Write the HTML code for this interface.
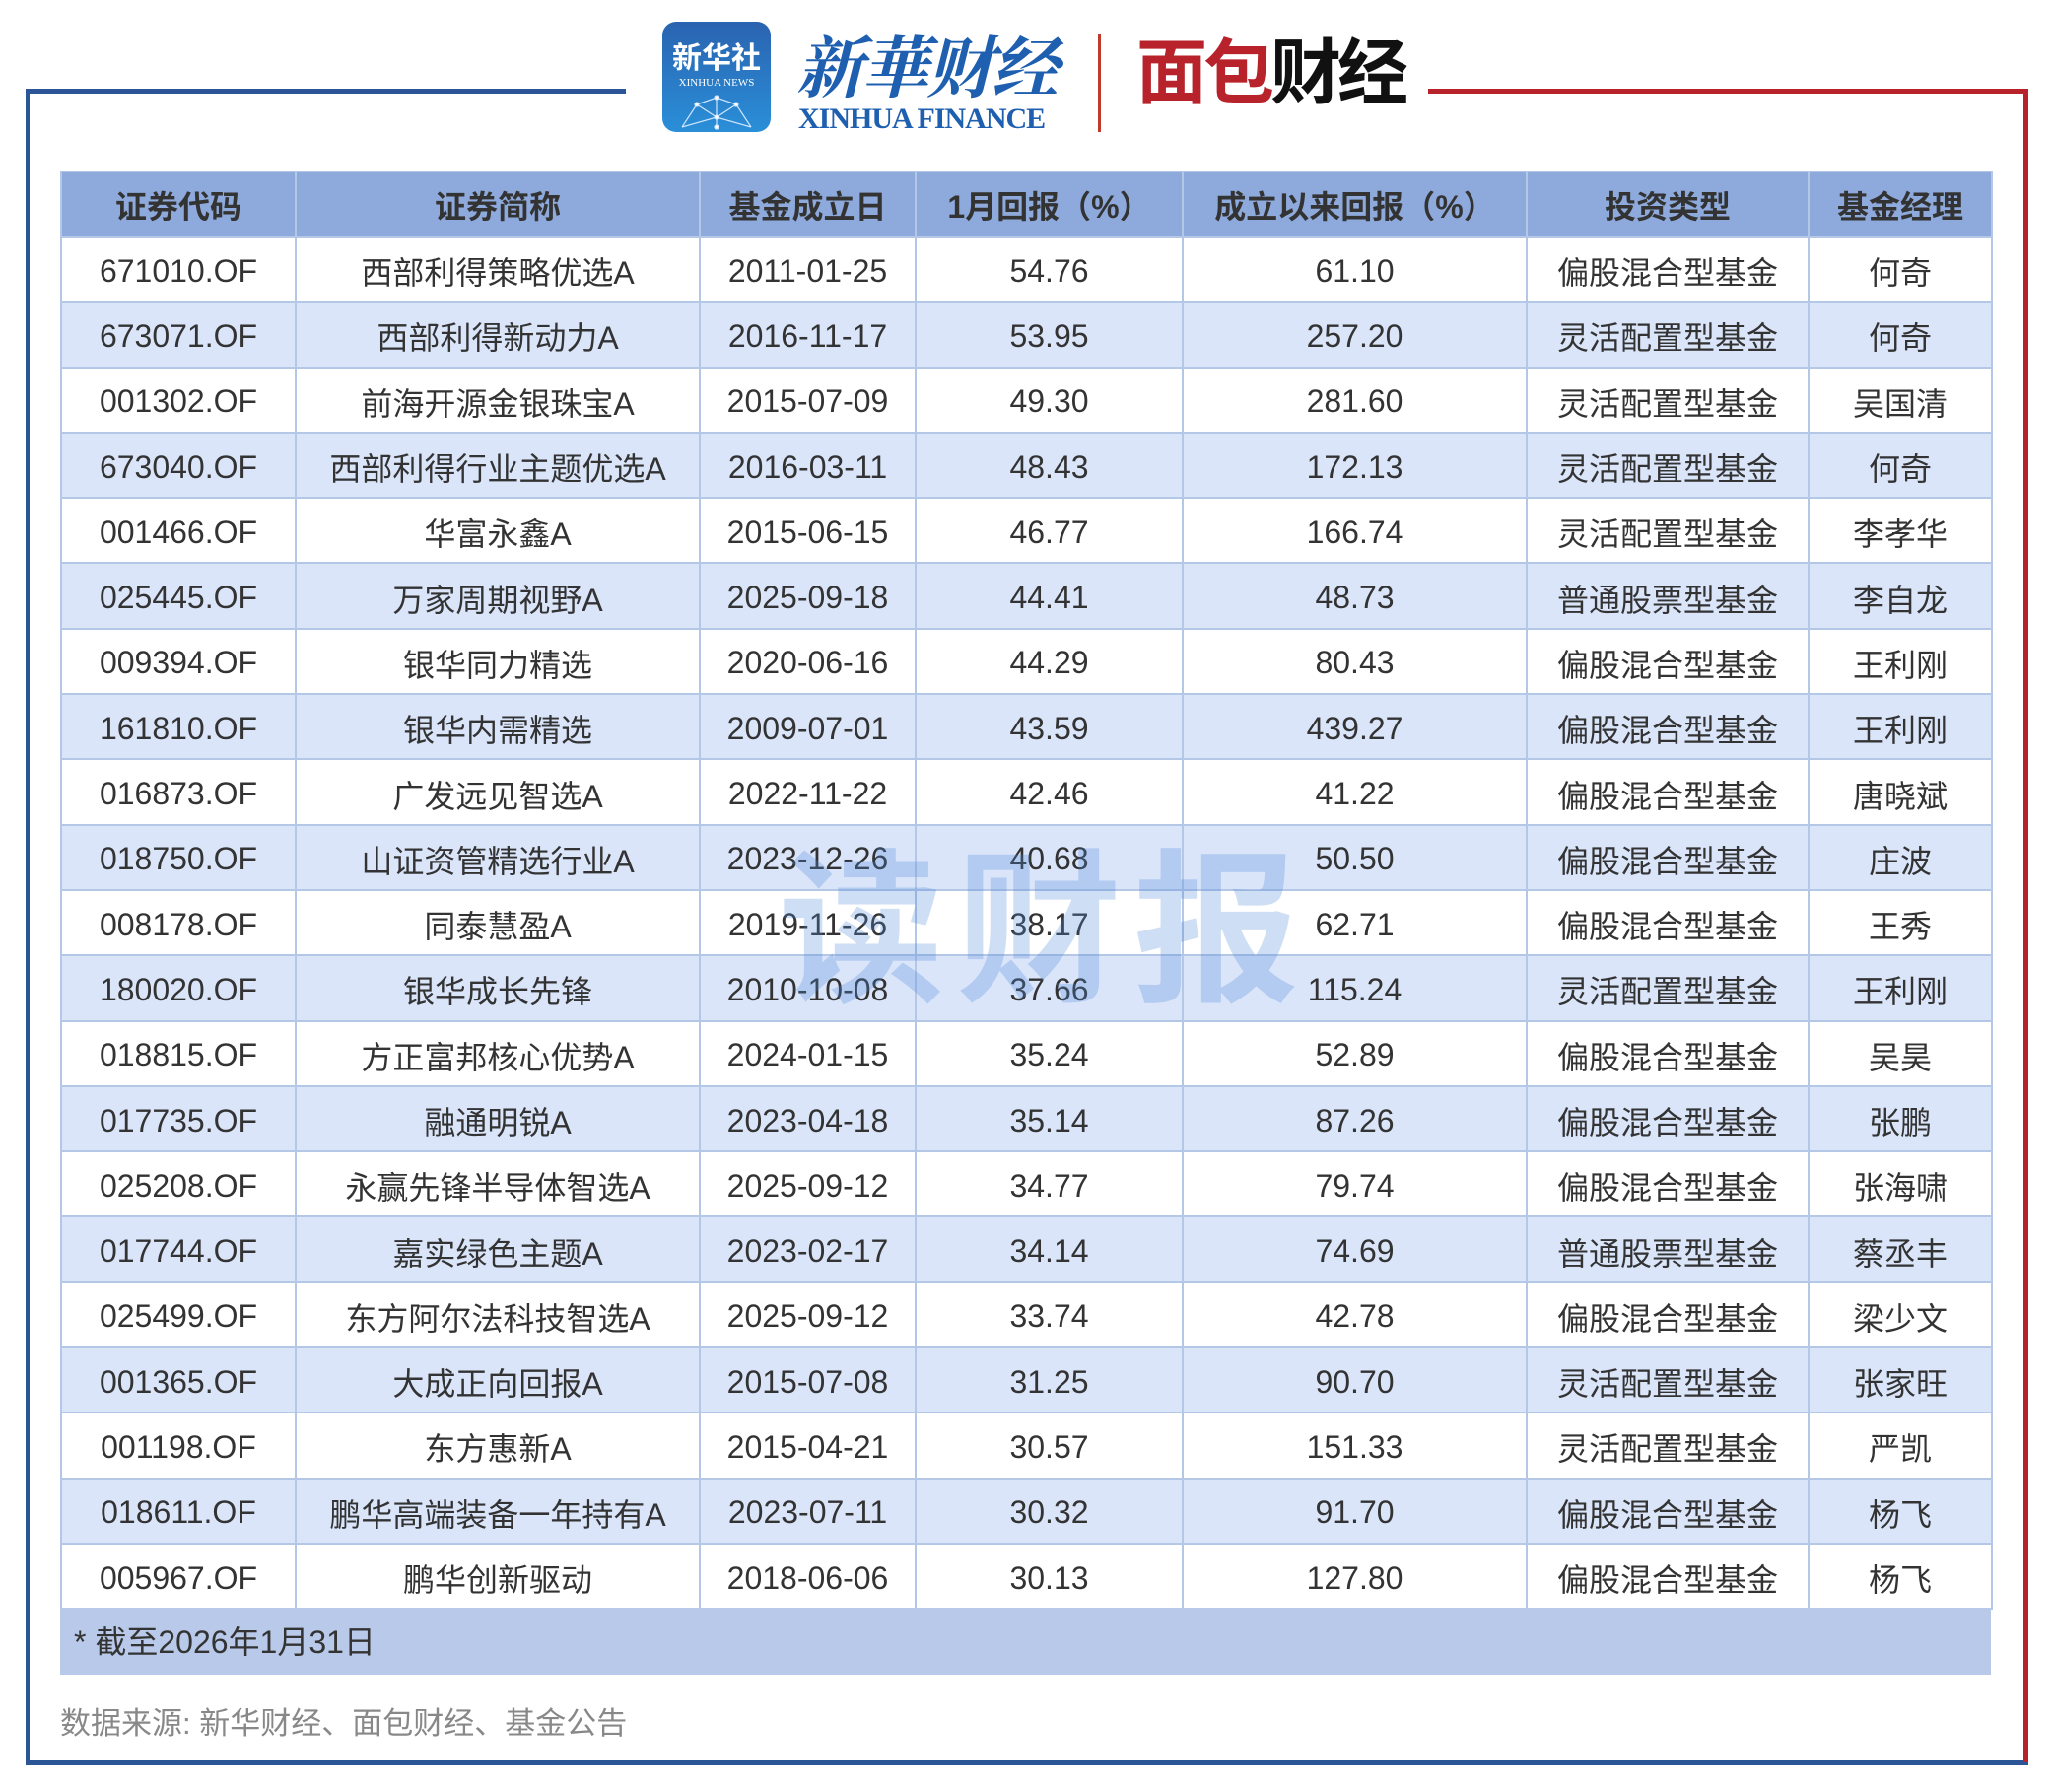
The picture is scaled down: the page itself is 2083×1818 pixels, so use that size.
<!DOCTYPE html>
<html><head><meta charset="utf-8"><style>
*{margin:0;padding:0;box-sizing:border-box}
body{width:2083px;height:1818px;background:#fff;position:relative;overflow:hidden;font-family:"Liberation Sans","Noto Sans CJK SC",sans-serif;color:#333}
.abs{position:absolute}
table{position:absolute;left:61px;top:173px;width:1959px;border-collapse:collapse;table-layout:fixed}
td,th{border:2px solid #b4c7e7;text-align:center;font-size:32px;height:66.3px;padding:4px 0 0 0;white-space:nowrap}
th{background:#8eaadc;height:66px;font-weight:bold;color:#333;padding-top:2px}
tr.s td{background:#dae5fa}
</style></head><body>
<!-- frame -->
<div class="abs" style="left:26px;top:90px;width:609px;height:5px;background:#2b5596"></div>
<div class="abs" style="left:26px;top:90px;width:4px;height:1701px;background:#2b5596"></div>
<div class="abs" style="left:26px;top:1786px;width:2032px;height:5px;background:#2b5596"></div>
<div class="abs" style="left:1449px;top:90px;width:609px;height:5px;background:#b8232b"></div>
<div class="abs" style="left:2053px;top:90px;width:5px;height:1698px;background:#b8232b"></div>
<!-- logos -->
<div class="abs" style="left:672px;top:22px;width:110px;height:112px;border-radius:14px;background:linear-gradient(#2a63b0,#2a8fd8);color:#fff;text-align:center">
<div style="font-size:30px;margin-top:12px;font-weight:bold">新华社</div>
<div style="font-size:11px;font-family:'Liberation Serif',serif">XINHUA NEWS</div>
<svg width="90" height="40" style="margin-top:4px" stroke="#cfe6ff" stroke-width="1.2" fill="#fff"><path d="M10 35 L25 12 L45 5 L65 12 L80 35 M25 12 L45 25 L65 12 M45 5 L45 35 M10 35 L45 25 L80 35" fill="none"/><circle cx="25" cy="12" r="2"/><circle cx="45" cy="5" r="2"/><circle cx="65" cy="12" r="2"/><circle cx="45" cy="25" r="2"/><circle cx="45" cy="35" r="2"/></svg>
</div>
<div class="abs" style="left:808px;top:16px;font-size:68px;font-style:italic;color:#1f5fb0;font-weight:bold;letter-spacing:-2px;font-family:'Noto Serif CJK SC',serif">新華财经</div>
<div class="abs" style="left:810px;top:104px;font-size:30px;color:#1f5fb0;font-weight:bold;font-family:'Liberation Serif',serif;letter-spacing:-1px">XINHUA FINANCE</div>
<div class="abs" style="left:1114px;top:34px;width:3px;height:100px;background:#c0392b"></div>
<div class="abs" style="left:1153px;top:30px;font-size:72px;font-weight:bold;letter-spacing:-4px;line-height:90px"><span style="color:#b8232b">面包</span><span style="color:#111">财经</span></div>
<table>
<colgroup><col style="width:238px"><col style="width:410px"><col style="width:219px"><col style="width:271px"><col style="width:349px"><col style="width:286px"><col style="width:186px"></colgroup>
<tr><th>证券代码</th><th>证券简称</th><th>基金成立日</th><th>1月回报（%）</th><th>成立以来回报（%）</th><th>投资类型</th><th>基金经理</th></tr>
<tr><td>671010.OF</td><td>西部利得策略优选A</td><td>2011-01-25</td><td>54.76</td><td>61.10</td><td>偏股混合型基金</td><td>何奇</td></tr>
<tr class="s"><td>673071.OF</td><td>西部利得新动力A</td><td>2016-11-17</td><td>53.95</td><td>257.20</td><td>灵活配置型基金</td><td>何奇</td></tr>
<tr><td>001302.OF</td><td>前海开源金银珠宝A</td><td>2015-07-09</td><td>49.30</td><td>281.60</td><td>灵活配置型基金</td><td>吴国清</td></tr>
<tr class="s"><td>673040.OF</td><td>西部利得行业主题优选A</td><td>2016-03-11</td><td>48.43</td><td>172.13</td><td>灵活配置型基金</td><td>何奇</td></tr>
<tr><td>001466.OF</td><td>华富永鑫A</td><td>2015-06-15</td><td>46.77</td><td>166.74</td><td>灵活配置型基金</td><td>李孝华</td></tr>
<tr class="s"><td>025445.OF</td><td>万家周期视野A</td><td>2025-09-18</td><td>44.41</td><td>48.73</td><td>普通股票型基金</td><td>李自龙</td></tr>
<tr><td>009394.OF</td><td>银华同力精选</td><td>2020-06-16</td><td>44.29</td><td>80.43</td><td>偏股混合型基金</td><td>王利刚</td></tr>
<tr class="s"><td>161810.OF</td><td>银华内需精选</td><td>2009-07-01</td><td>43.59</td><td>439.27</td><td>偏股混合型基金</td><td>王利刚</td></tr>
<tr><td>016873.OF</td><td>广发远见智选A</td><td>2022-11-22</td><td>42.46</td><td>41.22</td><td>偏股混合型基金</td><td>唐晓斌</td></tr>
<tr class="s"><td>018750.OF</td><td>山证资管精选行业A</td><td>2023-12-26</td><td>40.68</td><td>50.50</td><td>偏股混合型基金</td><td>庄波</td></tr>
<tr><td>008178.OF</td><td>同泰慧盈A</td><td>2019-11-26</td><td>38.17</td><td>62.71</td><td>偏股混合型基金</td><td>王秀</td></tr>
<tr class="s"><td>180020.OF</td><td>银华成长先锋</td><td>2010-10-08</td><td>37.66</td><td>115.24</td><td>灵活配置型基金</td><td>王利刚</td></tr>
<tr><td>018815.OF</td><td>方正富邦核心优势A</td><td>2024-01-15</td><td>35.24</td><td>52.89</td><td>偏股混合型基金</td><td>吴昊</td></tr>
<tr class="s"><td>017735.OF</td><td>融通明锐A</td><td>2023-04-18</td><td>35.14</td><td>87.26</td><td>偏股混合型基金</td><td>张鹏</td></tr>
<tr><td>025208.OF</td><td>永赢先锋半导体智选A</td><td>2025-09-12</td><td>34.77</td><td>79.74</td><td>偏股混合型基金</td><td>张海啸</td></tr>
<tr class="s"><td>017744.OF</td><td>嘉实绿色主题A</td><td>2023-02-17</td><td>34.14</td><td>74.69</td><td>普通股票型基金</td><td>蔡丞丰</td></tr>
<tr><td>025499.OF</td><td>东方阿尔法科技智选A</td><td>2025-09-12</td><td>33.74</td><td>42.78</td><td>偏股混合型基金</td><td>梁少文</td></tr>
<tr class="s"><td>001365.OF</td><td>大成正向回报A</td><td>2015-07-08</td><td>31.25</td><td>90.70</td><td>灵活配置型基金</td><td>张家旺</td></tr>
<tr><td>001198.OF</td><td>东方惠新A</td><td>2015-04-21</td><td>30.57</td><td>151.33</td><td>灵活配置型基金</td><td>严凯</td></tr>
<tr class="s"><td>018611.OF</td><td>鹏华高端装备一年持有A</td><td>2023-07-11</td><td>30.32</td><td>91.70</td><td>偏股混合型基金</td><td>杨飞</td></tr>
<tr><td>005967.OF</td><td>鹏华创新驱动</td><td>2018-06-06</td><td>30.13</td><td>127.80</td><td>偏股混合型基金</td><td>杨飞</td></tr>
</table>
<!-- watermark -->
<div class="abs" style="left:790px;top:845px;font-size:168px;line-height:200px;font-weight:bold;color:rgba(80,135,215,0.28);letter-spacing:12px;z-index:5">读财报</div>
<div class="abs" style="left:61px;top:1631px;width:1959px;height:68px;background:#b8c9e9;font-size:32px;line-height:70px;padding-left:14px">* 截至2026年1月31日</div>
<div class="abs" style="left:61px;top:1729px;font-size:31px;color:#888;line-height:40px">数据来源: 新华财经、面包财经、基金公告</div>
</body></html>
